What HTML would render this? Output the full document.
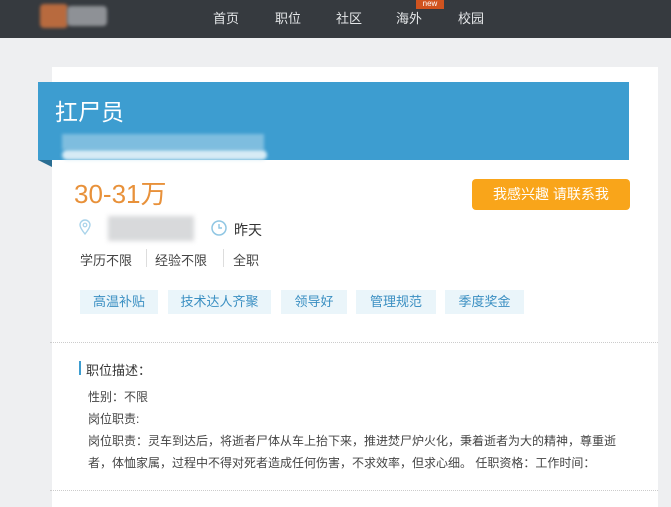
<!DOCTYPE html>
<html><head><meta charset="utf-8"><style>
*{margin:0;padding:0;box-sizing:border-box}
body{width:671px;height:493px;overflow:hidden;background:#eeeff1;font-family:"Liberation Sans","Noto Sans CJK SC",sans-serif;position:relative;color:#333}
.nav{position:absolute;left:0;top:0;width:671px;height:38px;background:#363a3f}
.nav span{position:absolute;top:8px;color:#e4e6e8;font-size:13px}
.card{position:absolute;left:52px;top:67px;width:606px;height:440px;background:#fff}
.banner{position:absolute;left:38px;top:82px;width:591px;height:78px;background:#3d9dd0}
.fold{position:absolute;left:38px;top:160px;width:0;height:0;border-top:7px solid #2a6e93;border-left:14px solid transparent}
.abs{position:absolute}
.tag{position:absolute;top:290px;height:24px;background:#eaf5fa;color:#3a8fc2;font-size:13px;line-height:24px;text-align:center}
.blur{position:absolute;filter:blur(1.5px)}
</style></head><body>
<div class="nav">
 <div class="blur" style="left:40px;top:4px;width:28px;height:24px;background:#b86a3e;border-radius:4px"></div>
 <div class="blur" style="left:67px;top:6px;width:40px;height:20px;background:#8e9196;border-radius:4px"></div>
 <span style="left:213px">首页</span><span style="left:275px">职位</span><span style="left:336px">社区</span><span style="left:396px">海外</span><span style="left:458px">校园</span>
 <div class="abs" style="left:416px;top:0;width:28px;height:9px;background:#d0531f;color:#fff;font-size:8px;line-height:8px;text-align:center">new</div>
</div>
<div class="card"></div>
<div class="banner"></div>
<div class="fold"></div>
<div class="abs" style="left:55px;top:93px;color:#fff;font-size:23px">扛尸员</div>
<div class="blur" style="left:62px;top:134px;width:202px;height:16px;background:#8fc6e3;opacity:.8"></div>
<div class="blur" style="left:62px;top:150px;width:205px;height:10px;background:#d6ebf5;border-radius:5px"></div>
<div class="abs" style="left:74px;top:174px;color:#e8913a;font-size:26px">30-31万</div>
<div class="abs" style="left:472px;top:179px;width:158px;height:31px;background:#f9a51a;border-radius:4px;color:#fff;font-size:14px;line-height:31px;text-align:center">我感兴趣 请联系我</div>
<svg class="abs" style="left:78px;top:218px" width="14" height="18" viewBox="0 0 14 18"><path d="M7 16C3 11 2 9 2 7a5 5 0 0 1 10 0c0 2-1 4-5 9z" fill="none" stroke="#a9d3ea" stroke-width="1.4"/><circle cx="7" cy="7" r="1.8" fill="none" stroke="#a9d3ea" stroke-width="1.2"/></svg>
<div class="blur" style="left:108px;top:216px;width:86px;height:25px;background:#d8d9db;filter:blur(2.5px)"></div>
<svg class="abs" style="left:210px;top:219px" width="18" height="18" viewBox="0 0 18 18"><circle cx="9" cy="9" r="7" fill="none" stroke="#8fc6e3" stroke-width="1.5"/><path d="M9 5v4h3" fill="none" stroke="#8fc6e3" stroke-width="1.4"/></svg>
<div class="abs" style="left:234px;top:220px;font-size:14px;color:#333">昨天</div>
<div class="abs" style="left:80px;top:250px;font-size:13px;color:#444">学历不限</div>
<div class="abs" style="left:146px;top:249px;width:1px;height:18px;background:#ddd"></div>
<div class="abs" style="left:155px;top:250px;font-size:13px;color:#444">经验不限</div>
<div class="abs" style="left:223px;top:249px;width:1px;height:18px;background:#ddd"></div>
<div class="abs" style="left:233px;top:250px;font-size:13px;color:#444">全职</div>
<div class="tag" style="left:80px;width:78px">高温补贴</div>
<div class="tag" style="left:168px;width:103px">技术达人齐聚</div>
<div class="tag" style="left:281px;width:66px">领导好</div>
<div class="tag" style="left:356px;width:80px">管理规范</div>
<div class="tag" style="left:445px;width:79px">季度奖金</div>
<div class="abs" style="left:50px;top:342px;width:608px;border-top:1px dotted #ccc"></div>
<div class="abs" style="left:79px;top:361px;width:2px;height:14px;background:#3d9dd0"></div>
<div class="abs" style="left:86px;top:360px;font-size:13px;color:#333">职位描述：</div>
<div class="abs" style="left:88px;top:386px;font-size:12px;color:#444;line-height:22px;width:548px">性别：不限<br>岗位职责:<br>岗位职责：灵车到达后，将逝者尸体从车上抬下来，推进焚尸炉火化，秉着逝者为大的精神，尊重逝者，体恤家属，过程中不得对死者造成任何伤害，不求效率，但求心细。 任职资格：工作时间：</div>
<div class="abs" style="left:50px;top:490px;width:608px;border-top:1px dotted #ccc"></div>
</body></html>
